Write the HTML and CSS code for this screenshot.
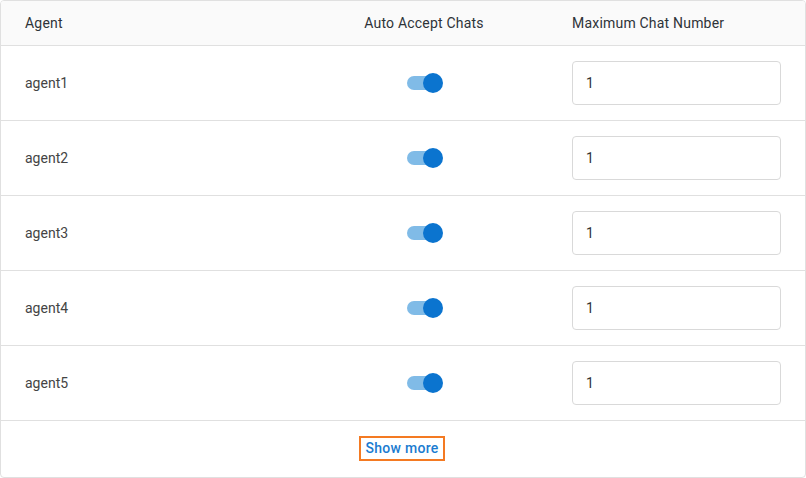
FILE: index.html
```html
<!DOCTYPE html>
<html>
<head>
<meta charset="utf-8">
<link rel="stylesheet" href="styles.css">
</head>
<body>
<div class="table">
  <div class="row head">
    <div class="cell">Agent</div>
    <div class="cell center">Auto Accept Chats</div>
    <div class="cell">Maximum Chat Number</div>
  </div>
  <div class="row">
    <div class="cell">agent1</div>
    <div class="cell center"><span class="toggle"><span class="knob"></span></span></div>
    <div class="cell"><div class="input">1</div></div>
  </div>
  <div class="row">
    <div class="cell">agent2</div>
    <div class="cell center"><span class="toggle"><span class="knob"></span></span></div>
    <div class="cell"><div class="input">1</div></div>
  </div>
  <div class="row">
    <div class="cell">agent3</div>
    <div class="cell center"><span class="toggle"><span class="knob"></span></span></div>
    <div class="cell"><div class="input">1</div></div>
  </div>
  <div class="row">
    <div class="cell">agent4</div>
    <div class="cell center"><span class="toggle"><span class="knob"></span></span></div>
    <div class="cell"><div class="input">1</div></div>
  </div>
  <div class="row">
    <div class="cell">agent5</div>
    <div class="cell center"><span class="toggle"><span class="knob"></span></span></div>
    <div class="cell"><div class="input">1</div></div>
  </div>
  <div class="footer">
    <span class="more">Show more</span>
  </div>
</div>
</body>
</html>
```
FILE: styles.css
```css
html, body {
  margin: 0;
  padding: 0;
  background: #fff;
}
body {
  font-family: Roboto, "Liberation Sans", sans-serif;
  font-size: 14px;
  color: #444;
}
.table {
  width: 806px;
  height: 478px;
  box-sizing: border-box;
  border: 1px solid #e0e0e0;
  border-radius: 4px;
  overflow: hidden;
  display: flex;
  flex-direction: column;
}
.row {
  display: grid;
  grid-template-columns: 299px 248px 1fr;
  height: 75px;
  box-sizing: border-box;
  border-bottom: 1px solid #e0e0e0;
  align-items: center;
  flex: none;
}
.row.head {
  height: 45px;
  background: #fafafa;
  color: #2e3338;
  letter-spacing: 0.2px;
}
.cell {
  padding: 0 24px;
  display: flex;
  align-items: center;
}
.cell.center {
  justify-content: center;
  padding: 0;
}
.toggle {
  position: relative;
  width: 30px;
  height: 14px;
  border-radius: 7px;
  background: #80bbe7;
  display: inline-block;
  margin-right: 6px;
  margin-left: 1px;
}
.knob {
  position: absolute;
  right: -6px;
  top: -3px;
  width: 20px;
  height: 20px;
  border-radius: 50%;
  background: #0b74cf;
}
.input {
  width: 209px;
  height: 44px;
  box-sizing: border-box;
  border: 1px solid #d9d9d9;
  border-radius: 4px;
  padding: 0 13px;
  display: flex;
  align-items: center;
  color: #333;
}
.footer {
  flex: 1;
  display: flex;
  align-items: center;
  justify-content: center;
}
.more {
  color: #1a7bd0;
  font-weight: 500;
  letter-spacing: 0.3px;
  border: 2px solid #f47a22;
  padding: 2px 4px;
  line-height: 17px;
  margin-left: -2px;
  margin-top: -1px;
}
```
